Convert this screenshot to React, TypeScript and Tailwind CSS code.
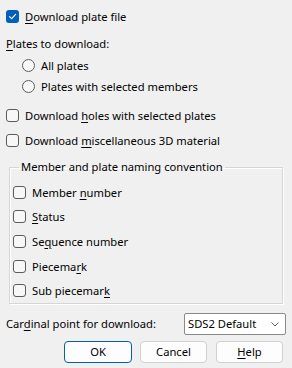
import React from 'react'

const font = { fontFamily: '"Noto Sans", "Open Sans", sans-serif' }

function Key({ children }: { children: React.ReactNode }) {
  return <span className="underline underline-offset-[2px] decoration-[1px]">{children}</span>
}

function CheckBox({ checked = false }: { checked?: boolean }) {
  if (checked) {
    return (
      <span className="flex h-[13px] w-[13px] shrink-0 items-center justify-center rounded-[3px] bg-[#005fb8]">
        <svg width="9" height="9" viewBox="0 0 9 9" fill="none">
          <path d="M1.5 4.6 L3.6 6.6 L7.6 2.4" stroke="white" strokeWidth="1.2" strokeLinecap="round" strokeLinejoin="round" />
        </svg>
      </span>
    )
  }
  return <span className="block h-[13px] w-[13px] shrink-0 rounded-[3px] border border-[#5c5c5c] bg-[#f7f7f7]" />
}

function Radio() {
  return <span className="block h-[13px] w-[13px] shrink-0 rounded-full border border-[#5c5c5c] bg-[#f7f7f7]" />
}

function Row({
  control,
  children,
  className = '',
}: {
  control: React.ReactNode
  children: React.ReactNode
  className?: string
}) {
  return (
    <div className={`flex h-[13px] items-center gap-[6px] ${className}`}>
      {control}
      <span className="whitespace-nowrap leading-[16px]">{children}</span>
    </div>
  )
}

export default function App() {
  return (
    <div
      className="flex h-[368px] w-[292px] flex-col bg-[#f0f0f0] px-[6px] pt-[10px] text-[11.2px] text-[#000]"
      style={font}
    >
      <Row control={<CheckBox checked />}>
        <Key>D</Key>ownload plate file
      </Row>

      <div className="mt-[13px] h-[16px] leading-[16px]">
        <Key>P</Key>lates to download:
      </div>

      <Row control={<Radio />} className="mt-[7px] ml-[16px]">
        All plates
      </Row>
      <Row control={<Radio />} className="mt-[8px] ml-[16px]">
        Plates with selected members
      </Row>

      <Row control={<CheckBox />} className="mt-[16px]">
        Download <Key>h</Key>oles with selected plates
      </Row>
      <Row control={<CheckBox />} className="mt-[12px]">
        Download <Key>m</Key>iscellaneous 3D material
      </Row>

      <fieldset className="mx-[3px] mt-[12px] border border-[#d6d6d6] pb-[6px] pl-[3px] shadow-[inset_1px_1px_0_#ffffff,1px_1px_0_#ffffff]">
        <legend className="ml-[6px] px-[2px] leading-[16px]">Member and plate naming convention</legend>
        <Row control={<CheckBox />} className="mt-[11px]">
          Member <Key>n</Key>umber
        </Row>
        <Row control={<CheckBox />} className="mt-[11px]">
          <Key>S</Key>tatus
        </Row>
        <Row control={<CheckBox />} className="mt-[12px]">
          Se<Key>q</Key>uence number
        </Row>
        <Row control={<CheckBox />} className="mt-[12px]">
          Piecema<Key>r</Key>k
        </Row>
        <Row control={<CheckBox />} className="mt-[11px]">
          Sub piecemar<Key>k</Key>
        </Row>
      </fieldset>

      <div className="mt-[9px] flex h-[22px] items-center justify-between">
        <span className="leading-[16px]">
          Car<Key>d</Key>inal point for download:
        </span>
        <div className="flex h-[22px] w-[102px] items-center justify-between rounded-[2px] border border-[#8a8a8a] bg-white pl-[3px] pr-[6px]">
          <span className="leading-[16px]">SDS2 Default</span>
          <svg width="8" height="5" viewBox="0 0 8 5" fill="none">
            <path d="M0.5 0.5 L4 4 L7.5 0.5" stroke="#606060" strokeWidth="1" />
          </svg>
        </div>
      </div>

      <div className="mr-[3px] mt-[6px] flex justify-end gap-[8px]">
        <button className="h-[22px] w-[68px] rounded-[4px] border border-[#005fb8] bg-[#fdfdfd] leading-[16px]">
          OK
        </button>
        <button className="h-[22px] w-[67px] rounded-[4px] border border-[#d0d0d0] bg-[#fdfdfd] leading-[16px]">
          Cancel
        </button>
        <button className="ml-[1px] h-[22px] w-[67px] rounded-[4px] border border-[#d0d0d0] bg-[#fdfdfd] leading-[16px]">
          <Key>H</Key>elp
        </button>
      </div>
    </div>
  )
}
